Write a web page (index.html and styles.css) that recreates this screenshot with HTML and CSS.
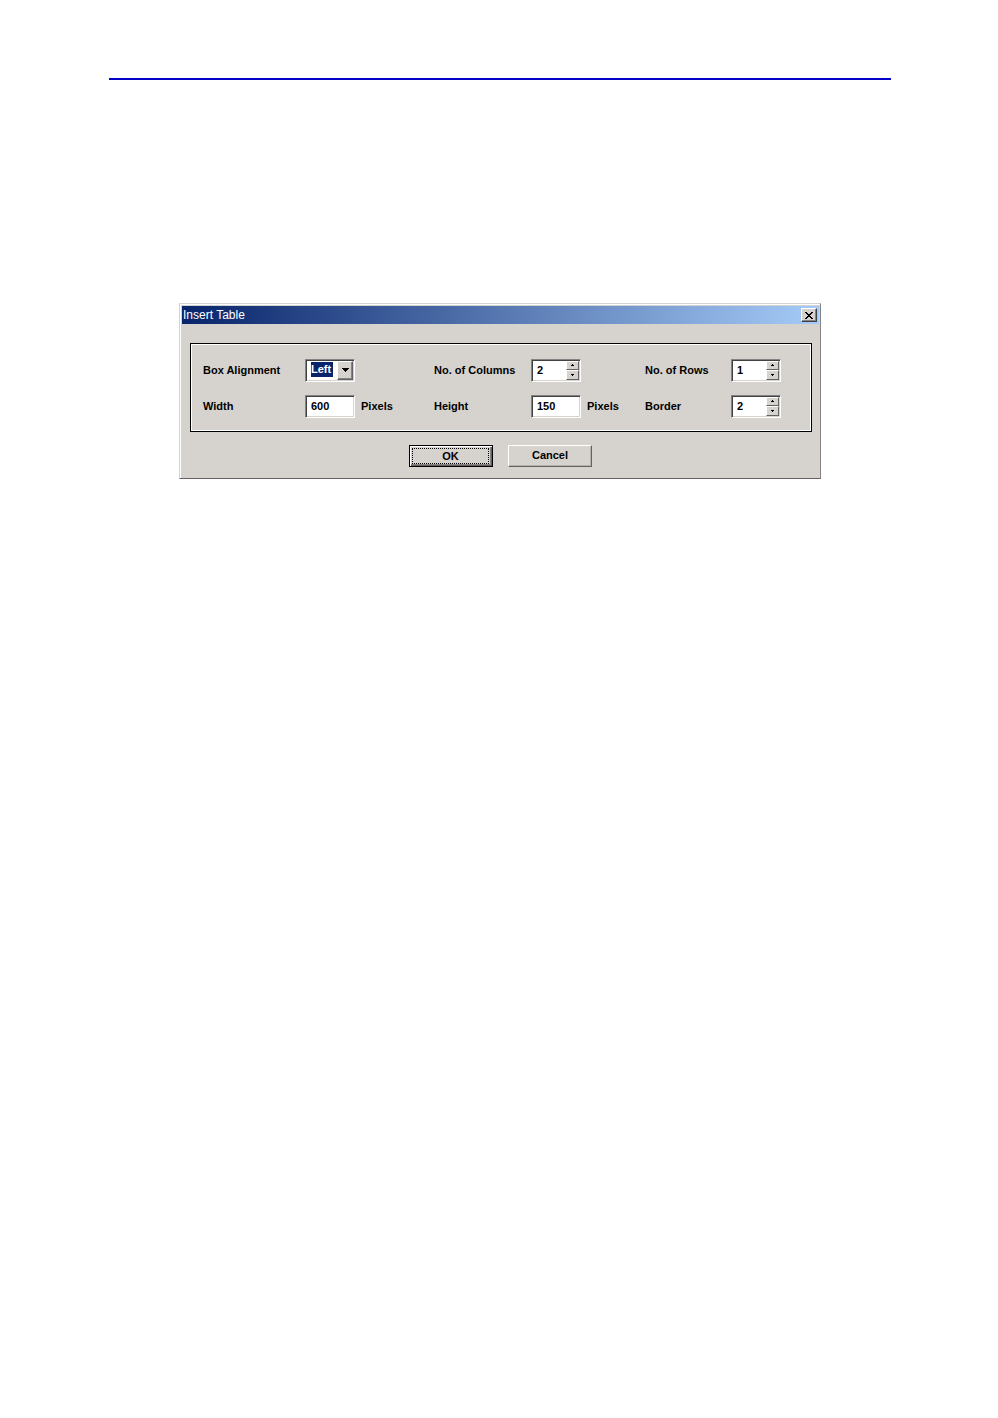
FILE: index.html
```
<!DOCTYPE html>
<html lang="en">
<head>
<meta charset="utf-8">
<title>Insert Table</title>
<link rel="stylesheet" href="styles.css">
</head>

<body>
<div class="page">
  <hr class="rule">
  <form class="dialog" onsubmit="return false">
    <div class="title_bar">
      <h1>Insert Table</h1>
      <button type="button" class="close" aria-label="Close">
        <svg width="8" height="7" viewBox="0 0 8 7" shape-rendering="crispEdges"><path d="M0 0h2v1h1v1h2V1h1V0h2v1H7v1H6v1H5v1h1v1h1v1h1v1H6V6H5V5H3v1H2v1H0V6h1V5h1V4h1V3H2V2H1V1H0z"/></svg>
      </button>
    </div>
    <div class="fields">
      <label for="align">Box Alignment</label>
      <div class="cell">
        <div class="box">
          <select id="align"><option>Left</option><option>Center</option><option>Right</option></select>
          <span class="arrow"><svg width="7" height="4" viewBox="0 0 7 4" shape-rendering="crispEdges"><path d="M0 0h7v1H6v1H5v1H4v1H3V3H2V2H1V1H0z"/></svg></span>
        </div>
      </div>
      <label for="cols">No. of Columns</label>
      <div class="cell">
        <div class="box">
          <input type="number" id="cols" value="2">
          <div class="spin">
            <button type="button" aria-label="More columns"><svg width="3" height="2" viewBox="0 0 3 2"><path d="M1 0h1v1h1v1H0V1h1z"/></svg></button>
            <button type="button" aria-label="Fewer columns"><svg width="3" height="2" viewBox="0 0 3 2"><path d="M0 0h3v1H2v1H1V1H0z"/></svg></button>
          </div>
        </div>
      </div>
      <label for="rows">No. of Rows</label>
      <div class="cell">
        <div class="box">
          <input type="number" id="rows" value="1">
          <div class="spin">
            <button type="button" aria-label="More rows"><svg width="3" height="2" viewBox="0 0 3 2"><path d="M1 0h1v1h1v1H0V1h1z"/></svg></button>
            <button type="button" aria-label="Fewer rows"><svg width="3" height="2" viewBox="0 0 3 2"><path d="M0 0h3v1H2v1H1V1H0z"/></svg></button>
          </div>
        </div>
      </div>

      <label for="width">Width</label>
      <div class="cell">
        <div class="box"><input type="text" id="width" value="600"></div>
        <span>Pixels</span>
      </div>
      <label for="height">Height</label>
      <div class="cell">
        <div class="box"><input type="text" id="height" value="150"></div>
        <span>Pixels</span>
      </div>
      <label for="border">Border</label>
      <div class="cell">
        <div class="box">
          <input type="number" id="border" value="2">
          <div class="spin">
            <button type="button" aria-label="Thicker border"><svg width="3" height="2" viewBox="0 0 3 2"><path d="M1 0h1v1h1v1H0V1h1z"/></svg></button>
            <button type="button" aria-label="Thinner border"><svg width="3" height="2" viewBox="0 0 3 2"><path d="M0 0h3v1H2v1H1V1H0z"/></svg></button>
          </div>
        </div>
      </div>
    </div>
    <div class="buttons">
      <button type="submit" class="btn ok"><span>OK</span></button>
      <button type="button" class="btn">Cancel</button>
    </div>
  </form>
</div>
</body>
</html>
```

FILE: styles.css
```
* {
	margin: 0;
	padding: 0;
	box-sizing: border-box;
}
body {
	background: #fff;
	color: #000;
	font: bold 11px/14px "Liberation Sans", Arial, sans-serif;
}
svg {
	display: block;
}
input, select, button {
	font: inherit;
	color: inherit;
	border: 0;
	border-radius: 0;
	outline: 0;
	-webkit-appearance: none;
	appearance: none;
}
.page {
	padding: 78px 107px 0 109px;
}
.rule {
	height: 2px;
	border: 0;
	background: #0000c8;
}
.dialog {
	max-width: 642px;
	margin: 223px auto 0;
	padding: 2px 1px 11px 2px;
	background: #d6d3ce;
	border: 1px solid;
	border-color: #d6d3ce #848284 #636163 #d6d3ce;
	box-shadow: inset 1px 1px #fff;
}
/* title */
.title_bar {
	display: flex;
	align-items: center;
	justify-content: space-between;
	height: 18px;
	padding: 0 2px 0 1px;
	background: linear-gradient(to right, #08246b, #a5cbf7);
}
.title_bar h1 {
	font-size: 12px;
	font-weight: normal;
	color: #fff;
}
.close {
	display: flex;
	align-items: center;
	justify-content: center;
	width: 16px;
	height: 14px;
	background: #d6d3ce;
	border: 1px solid;
	border-color: #fff #424142 #424142 #fff;
	box-shadow: inset -1px -1px #848284;
}
/* fields */
.fields {
	display: grid;
	grid-template-columns: 102fr 129fr 97fr 114fr 86fr 80fr;
	grid-auto-rows: 24px;
	row-gap: 12px;
	align-items: center;
	margin: 19px 7px 0 8px;
	padding: 14px 0 13px 12px;
	border: 1px solid #000;
	box-shadow: inset 1px 1px #fff, inset -1px -1px #fff;
}
.cell {
	display: flex;
	align-items: center;
	gap: 6px;
}
.box {
	display: flex;
	width: 50px;
	height: 23px;
	padding: 1px;
	background: #fff;
	border: 1px solid;
	border-color: #848284 #fff #fff #848284;
	box-shadow: inset 1px 1px #424142, inset -1px -1px #d6d3ce;
}
.box input {
	flex: 1;
	min-width: 0;
	padding-left: 4px;
	background: none;
	-moz-appearance: textfield;
}
.box input::-webkit-inner-spin-button {
	display: none;
}
.box select {
	width: 22px;
	height: 15px;
	margin: 1px auto 0 4px;
	background: #08246b;
	color: #fff;
}
.arrow, .spin button, .btn {
	display: flex;
	align-items: center;
	justify-content: center;
	background: #d6d3ce;
	border: 1px solid;
	border-color: #fff #636163 #636163 #fff;
}
.arrow {
	width: 16px;
	box-shadow: inset -1px -1px #848284;
}
.spin {
	display: flex;
	flex-direction: column;
	width: 13px;
}
.spin button {
	flex: 1;
}
/* buttons */
.buttons {
	display: flex;
	justify-content: center;
	gap: 15px;
	margin-top: 13px;
}
.btn {
	width: 84px;
	height: 22px;
	padding-bottom: 2px;
	box-shadow: inset -1px -1px #b5b2ad;
}
.ok {
	padding: 2px 3px 3px 2px;
	border-color: #000;
	box-shadow: inset 1px 1px #fff, inset -1px -1px #636163, inset -2px -2px #848284;
}
.ok span {
	flex: 1;
	border: 1px dotted #000;
}
```
